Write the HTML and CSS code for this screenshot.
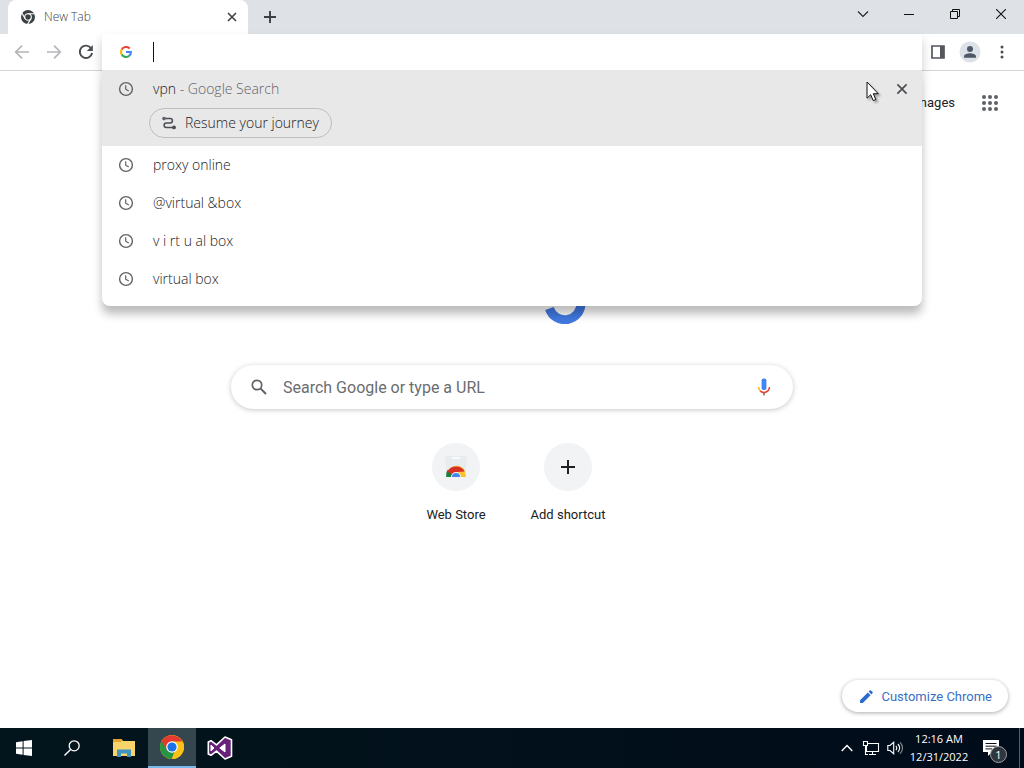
FILE: index.html
```html
<!DOCTYPE html>
<html lang="en">
<head>
<meta charset="utf-8">
<title>New Tab</title>
<link rel="stylesheet" href="styles.css">
</head>
<body>
<svg class="defs" aria-hidden="true">
  <symbol id="clock" viewBox="0 0 16 16"><circle cx="8" cy="8" r="6.4" fill="none" stroke="#5f6368" stroke-width="1.4"/><path d="M7.7 4.2V8.2L10.8 10" fill="none" stroke="#5f6368" stroke-width="1.2"/></symbol>
</svg>

<header class="tabstrip">
  <div class="tab">
    <svg width="16" height="16" viewBox="0 0 16 16"><circle cx="8" cy="8" r="7" fill="#3c4043"/><g stroke="#fff" stroke-width="1.1" fill="none"><circle cx="8" cy="8" r="3.3"/><path d="M8 4.7H14.8M5.1 9.6L1.7 3.8M10.9 9.6L7.5 15.4"/></g></svg>
    <span class="tab-title">New Tab</span>
    <button class="tab-close" aria-label="Close tab"><svg width="10" height="10" viewBox="0 0 10 10"><path d="M1 1L9 9M9 1L1 9" stroke="#3c4043" stroke-width="1.6"/></svg></button>
  </div>
  <button class="new-tab" aria-label="New tab"><svg width="12" height="12" viewBox="0 0 12 12"><path d="M6 0V12M0 6H12" stroke="#3c4043" stroke-width="1.9"/></svg></button>
  <div class="window-controls">
    <button aria-label="Search tabs"><svg width="12" height="12" viewBox="0 0 12 12"><path d="M1 3.5L6 8.5L11 3.5" fill="none" stroke="#202124" stroke-width="1.1"/></svg></button>
    <button aria-label="Minimize"><svg width="10" height="10" viewBox="0 0 10 10"><path d="M0 5.5H10" stroke="#111" stroke-width="1"/></svg></button>
    <button aria-label="Restore"><svg width="10" height="10" viewBox="0 0 10 10"><path d="M.5 2.5H7.5V9.5H.5ZM2.5 2.5V.5H9.5V7.5H7.5" fill="none" stroke="#111" stroke-width="1"/></svg></button>
    <button aria-label="Close"><svg width="10" height="10" viewBox="0 0 10 10"><path d="M0 0L10 10M10 0L0 10" stroke="#111" stroke-width="1.1"/></svg></button>
  </div>
</header>

<div class="toolbar">
  <button aria-label="Back"><svg width="16" height="16" viewBox="0 0 16 16"><path d="M15 8H2M8 1.6L1.7 8L8 14.4" fill="none" stroke="#b4b6b9" stroke-width="1.7"/></svg></button>
  <button aria-label="Forward"><svg width="16" height="16" viewBox="0 0 16 16"><path d="M1 8H14M8 1.6L14.3 8L8 14.4" fill="none" stroke="#b4b6b9" stroke-width="1.7"/></svg></button>
  <button aria-label="Reload"><svg width="16" height="16" viewBox="0 0 16 16"><path d="M13.2 4.4A6.2 6.2 0 1 0 14.1 9" fill="none" stroke="#4a4d51" stroke-width="1.9"/><path d="M14.8 1V7H8.8Z" fill="#4a4d51"/></svg></button>
  <div class="omnibox">
    <div class="omnibox-row">
      <svg class="g-icon" width="12" height="12" viewBox="0 0 12 12"><g fill="none" stroke-width="2.1"><path d="M1.7 3.5A5 5 0 0 1 9.6 2.5" stroke="#ea4335"/><path d="M1.7 3.5A5 5 0 0 0 1.7 8.5" stroke="#fbbc05"/><path d="M1.7 8.5A5 5 0 0 0 9.2 9.8" stroke="#34a853"/><path d="M9.2 9.8A5 5 0 0 0 10.9 6H6" stroke="#4285f4"/></g></svg>
      <span class="caret"></span>
      <input type="text" aria-label="Address and search bar">
    </div>
    <div class="popup">
      <ul>
        <li class="selected">
          <div class="suggestion"><svg width="16" height="16"><use href="#clock"/></svg><span>vpn <span class="muted">- Google Search</span></span>
            <button class="remove" aria-label="Remove suggestion"><svg width="12" height="12" viewBox="0 0 12 12"><path d="M1.4 1.4L10.6 10.6M10.6 1.4L1.4 10.6" stroke="#4a4d51" stroke-width="1.7"/></svg></button></div>
          <button class="journey"><svg width="14" height="14" viewBox="0 0 14 14"><path d="M2 2.6H8.2A2.2 2.2 0 0 1 8.2 7H4.3A2.2 2.2 0 0 0 4.3 11.4H12" fill="none" stroke="#4a4d51" stroke-width="1.5"/><circle cx="2" cy="2.6" r="1.8" fill="#5f6368"/><circle cx="12" cy="11.4" r="1.9" fill="#4a4d51"/></svg>Resume your journey</button>
        </li>
        <li><div class="suggestion"><svg width="16" height="16"><use href="#clock"/></svg><span>proxy online</span></div></li>
        <li><div class="suggestion"><svg width="16" height="16"><use href="#clock"/></svg><span>@virtual &amp;box</span></div></li>
        <li><div class="suggestion"><svg width="16" height="16"><use href="#clock"/></svg><span>v i rt u al box</span></div></li>
        <li><div class="suggestion"><svg width="16" height="16"><use href="#clock"/></svg><span>virtual box</span></div></li>
      </ul>
    </div>
  </div>
  <button aria-label="Side panel"><svg width="14" height="14" viewBox="0 0 14 14"><path d="M1 1H13V13H1Z" fill="#fff" stroke="#54575b" stroke-width="1.7"/><path d="M9 1H13V13H9Z" fill="#54575b"/></svg></button>
  <button aria-label="Profile"><svg width="22" height="22" viewBox="0 0 22 22"><circle cx="11" cy="11" r="10.5" fill="#dde2e9"/><circle cx="11" cy="8" r="3" fill="#4d5966"/><path d="M5 16.8V15.3C5 13.2 8.6 12.2 11 12.2S17 13.2 17 15.3V16.8Z" fill="#4d5966"/></svg></button>
  <button aria-label="Menu"><svg width="4" height="14" viewBox="0 0 4 14"><g fill="#4a4d51"><circle cx="2" cy="2" r="1.5"/><circle cx="2" cy="7" r="1.5"/><circle cx="2" cy="12" r="1.5"/></g></svg></button>
</div>

<main class="page">
  <nav class="page-nav">
    <a href="#images">Images</a>
    <button aria-label="Google apps"><svg width="16" height="16" viewBox="0 0 16 16"><g fill="#5f6368"><circle cx="2" cy="2" r="2"/><circle cx="8" cy="2" r="2"/><circle cx="14" cy="2" r="2"/><circle cx="2" cy="8" r="2"/><circle cx="8" cy="8" r="2"/><circle cx="14" cy="8" r="2"/><circle cx="2" cy="14" r="2"/><circle cx="8" cy="14" r="2"/><circle cx="14" cy="14" r="2"/></g></svg></button>
  </nav>
  <svg class="logo" width="272" height="92" viewBox="0 0 272 92" role="img" aria-label="Google"><path d="M173.4 76.5A16.2 16.2 0 0 0 205 71V60" fill="none" stroke="#4079e0" stroke-width="9"/></svg>
  <label class="search">
    <svg width="18" height="18" viewBox="0 0 18 18"><circle cx="7" cy="7" r="4.7" fill="none" stroke="#5f6368" stroke-width="1.7"/><path d="M10.4 10.4L16 16" stroke="#5f6368" stroke-width="2"/></svg>
    <input type="text" placeholder="Search Google or type a URL" aria-label="Search Google or type a URL">
    <button aria-label="Search by voice"><svg width="14" height="18" viewBox="0 0 14 18"><rect x="4.6" y="0.5" width="4.8" height="11.5" rx="1.8" fill="#4285f4"/><g fill="none" stroke-width="1.5"><path d="M1.6 9A5.4 5.4 0 0 0 3.2 12.9" stroke="#fbbc05"/><path d="M3.2 12.9A5.4 5.4 0 0 0 12.4 9" stroke="#ea4335"/><path d="M7 14.5V17.4" stroke="#7a6a55"/></g></svg></button>
  </label>
  <div class="shortcuts">
    <a class="tile" href="#store"><span class="disc"><svg width="24" height="24" viewBox="0 0 24 24"><path d="M1 1H23L21.5 21H2.5Z" fill="#e9ecef"/><path d="M8 2H16V4H8Z" fill="#f8f9fa"/><g transform="translate(0 1)"><path d="M5.5 12.5A10 10 0 0 1 20 13L22 21H12Z" fill="#fbc02d"/><path d="M3.5 14A10 10 0 0 0 2.2 21H9L7 14Z" fill="#188038"/><path d="M3.4 15.5A10 10 0 0 1 20.8 15.5L13 16L7.8 18.5Z" fill="#d93025"/><path d="M7 21A5 5 0 0 1 17 21Z" fill="#f1f3f4"/><path d="M8 21A4 4 0 0 1 16 21Z" fill="#4285f4"/></g></svg></span><span>Web Store</span></a>
    <button class="tile"><span class="disc"><svg width="14" height="14" viewBox="0 0 14 14"><path d="M7 0V14M0 7H14" stroke="#202124" stroke-width="2"/></svg></span><span>Add shortcut</span></button>
  </div>
  <button class="customize"><svg width="14" height="14" viewBox="0 0 14 14"><path d="M1 13V10.2L8.8 2.4L11.6 5.2L3.8 13ZM9.6 1.6L11 .3Q11.5 0 12 .4L13.6 2Q14 2.5 13.6 3L12.4 4.4Z" fill="#2a6bcb"/></svg>Customize Chrome</button>
</main>

<footer class="taskbar">
  <button aria-label="Start"><svg width="16" height="16" viewBox="0 0 16 16"><path d="M0 2.3L6.6 1.3V7.5H0ZM7.6 1.1L16 0V7.5H7.6ZM0 8.5H6.6V14.7L0 13.7ZM7.6 8.5H16V16L7.6 14.9Z" fill="#fff"/></svg></button>
  <button aria-label="Search"><svg width="16" height="16" viewBox="0 0 16 16"><circle cx="10.2" cy="5.8" r="5" fill="none" stroke="#fff" stroke-width="1.3"/><path d="M6.6 9.4L.5 15.5" stroke="#fff" stroke-width="1.4"/></svg></button>
  <div class="apps">
    <button aria-label="File Explorer"><svg width="22" height="20" viewBox="0 0 22 20"><path d="M0 1H8.5L10 3H22V18H0Z" fill="#f8d56b"/><path d="M0 1H8.5L9.3 2.3L8 4H0Z" fill="#e6a42c"/><path d="M4 19V11.5H18V19H14V15.5H8V19Z" fill="#3f94c0"/></svg></button>
    <button class="active" aria-label="Google Chrome"><svg width="24" height="24" viewBox="0 0 24 24"><circle cx="12" cy="12" r="12" fill="#fbc116"/><path d="M12 12L17.2 9L11.8 24A12 12 0 0 1 1.6 6Z" fill="#269645"/><path d="M12 12L17.2 15L11.8 24H12A12 12 0 0 0 22.4 6H12Z" fill="#fbc116"/><path d="M1.6 6A12 12 0 0 1 22.4 6.5H12L6.8 15Z" fill="#e33b2e"/><circle cx="12" cy="12" r="5.8" fill="#fff"/><circle cx="12" cy="12" r="4.6" fill="#1a73e8"/></svg></button>
    <button aria-label="Visual Studio"><svg width="26" height="24" viewBox="0 0 26 24"><path d="M18 1L24.5 3.7V20.3L18 23L9.5 15.2L4 19.3L1.3 18V6L4 4.7L9.5 8.8Z" fill="#68217a" stroke="#fff" stroke-width="1.6" stroke-linejoin="round"/><path d="M18 8V16L12.8 12ZM4 9V15L7 12Z" fill="#fff" stroke="#fff" stroke-width="1"/></svg></button>
  </div>
  <div class="tray">
    <button aria-label="Hidden icons"><svg width="12" height="8" viewBox="0 0 12 8"><path d="M.7 7L6 1.5L11.3 7" fill="none" stroke="#fff" stroke-width="1.4"/></svg></button>
    <button aria-label="Network"><svg width="18" height="16" viewBox="0 0 18 16"><g fill="none" stroke="#fff" stroke-width="1.1"><path d="M5 3.5H16.5V11.5H4.5V6"/><path d="M10.5 11.5V14.5M7 14.5H14"/><path d="M1.5 1.5H5.5V5.5H1.5ZM3.5 5.5V14.5H6"/></g></svg></button>
    <button aria-label="Volume"><svg width="17" height="16" viewBox="0 0 17 16"><g fill="none" stroke="#fff" stroke-width="1.1"><path d="M.8 5.5H3L6.7 2.3V13.7L3 10.5H.8Z"/><path d="M8.8 5.8A3 3 0 0 1 8.8 10.2M10.9 4A5.5 5.5 0 0 1 10.9 12"/><path d="M13.1 2.3A8 8 0 0 1 13.1 13.7" stroke="#8a949a"/></g></svg></button>
    <time class="clock" datetime="2022-12-31T00:16"><span>12:16 AM</span><span>12/31/2022</span></time>
    <button class="notices" aria-label="1 new notification"><svg width="18" height="18" viewBox="0 0 18 18"><path d="M1 1H17V13H10L6 17V13H1Z" fill="#fff"/><path d="M3.5 4.5H14.5M3.5 7.2H14.5M3.5 9.9H10" stroke="#04131b" stroke-width="1"/></svg><span class="badge">1</span></button>
    <span class="desktop"></span>
  </div>
</footer>

<svg class="pointer" width="14" height="22" viewBox="0 0 14 22"><path d="M1 1V17.2L4.7 13.7L7.2 19.6L9.8 18.5L7.3 12.7H12.3Z" fill="#fff" stroke="#111" stroke-width="1"/></svg>
</body>
</html>
```

FILE: styles.css
```css
* { box-sizing: border-box; }

body {
  margin: 0;
  min-height: 100vh;
  display: flex;
  flex-direction: column;
  background: #fff;
  color: #202124;
  font: 13px/18px "Open Sans", "Noto Sans", sans-serif;
}

button {
  border: 0;
  padding: 0;
  background: none;
  color: inherit;
  font: inherit;
  display: flex;
  align-items: center;
  justify-content: center;
}

input { border: 0; outline: 0; background: none; font: inherit; min-width: 0; }
a { color: inherit; text-decoration: none; }
svg { display: block; flex: none; }
.defs { position: absolute; width: 0; height: 0; }

/* Tab strip */
.tabstrip { display: flex; height: 34px; padding-left: 8px; background: #dee1e6; }
.tab {
  width: 240px;
  display: flex;
  align-items: center;
  gap: 8px;
  padding: 0 8px 0 12px;
  background: #fff;
  border-radius: 8px 8px 0 0;
  color: #3c4043;
  font-size: 12px;
  font-weight: 300;
}
.tab-title { flex: 1; }
.tab-close { width: 16px; height: 16px; }
.new-tab { width: 28px; margin-left: 8px; }
.window-controls { display: flex; margin-left: auto; height: 28px; }
.window-controls button { width: 46px; }

/* Toolbar */
.toolbar {
  display: flex;
  height: 37px;
  padding: 0 6px;
  border-bottom: 1px solid #d3d5d8;
  background: #fff;
}
.toolbar > button { width: 32px; height: 36px; }
.omnibox { flex: 1; position: relative; z-index: 2; box-shadow: 0 6px 10px #0003; }
.omnibox-row { position: relative; z-index: 1; height: 36px; display: flex; align-items: center; padding-left: 18px; background: #fff; }
.omnibox-row input { flex: 1; height: 28px; }
.caret { width: 1px; height: 20px; margin-left: 21px; background: #111; }
.popup {
  position: absolute;
  top: 100%;
  left: 0;
  right: 0;
  padding-bottom: 8px;
  background: #fff;
  border-radius: 0 0 8px 8px;
  box-shadow: 0 8px 10px #0004;
  font-size: 14px;
  font-weight: 300;
}
.popup ul { margin: 0; padding: 0; list-style: none; }
.selected { background: #e8e8e8; padding-bottom: 8px; }
.suggestion { display: flex; align-items: center; height: 38px; padding: 0 8px 0 16px; gap: 19px; }
.muted { color: #5f6368; }
.remove { width: 24px; height: 24px; margin-left: auto; }
.journey {
  height: 30px;
  margin-left: 47px;
  padding: 0 12px;
  gap: 9px;
  border: 1px solid #bcbec0;
  border-radius: 15px;
}

/* New tab page */
.page {
  flex: 1;
  position: relative;
  display: flex;
  flex-direction: column;
  align-items: center;
  font-family: Roboto, sans-serif;
}
.page-nav {
  align-self: stretch;
  display: flex;
  justify-content: flex-end;
  align-items: center;
  gap: 15px;
  height: 64px;
  padding-right: 14px;
}
.page-nav button { width: 40px; height: 40px; }
.logo { margin-top: 97px; }
.search {
  display: flex;
  align-items: center;
  width: min(562px, 90%);
  height: 44px;
  margin-top: 41px;
  padding: 0 19px;
  border-radius: 22px;
  box-shadow: 0 1px 5px #20212440;
}
.search input { flex: 1; margin-left: 15px; padding: 2px 0 0; font-size: 16px; }
.search input::placeholder { color: #6a6d71; opacity: 1; }
.search button { width: 20px; }
.shortcuts { display: flex; margin-top: 34px; }
.tile { width: 112px; display: flex; flex-direction: column; align-items: center; gap: 15px; }
.disc {
  width: 48px;
  height: 48px;
  display: flex;
  align-items: center;
  justify-content: center;
  border-radius: 50%;
  background: #f1f3f4;
}
.customize {
  position: absolute;
  right: 16px;
  bottom: 16px;
  height: 32px;
  padding: 1px 16px 0 17px;
  gap: 8px;
  border-radius: 16px;
  background: #fff;
  box-shadow: 0 1px 4px #0005;
  color: #3a70c4;
}

/* Taskbar */
.taskbar { display: flex; height: 40px; background: linear-gradient(90deg, #03151c, #010c1a); color: #fff; font-size: 11px; }
.taskbar > button, .apps button { width: 48px; height: 40px; }
.apps { display: flex; margin-left: 4px; }
.apps .active { background: #34474f; border-bottom: 2px solid #76b9ed; }
.tray { display: flex; align-items: center; margin-left: auto; }
.tray > button { width: 24px; height: 40px; }
.clock { display: flex; flex-direction: column; align-items: center; width: 64px; }
.tray > .notices { position: relative; width: 48px; padding-right: 8px; }
.badge {
  position: absolute;
  left: 19px;
  top: 18px;
  width: 17px;
  height: 17px;
  border: 1px solid #9a9fa4;
  border-radius: 50%;
  background: #30363d;
  line-height: 15px;
}
.desktop { width: 5px; height: 40px; border-left: 1px solid #56606a; }

.pointer { position: absolute; left: 866px; top: 81px; z-index: 5; filter: drop-shadow(2px 2px 1px #0005); }
```
